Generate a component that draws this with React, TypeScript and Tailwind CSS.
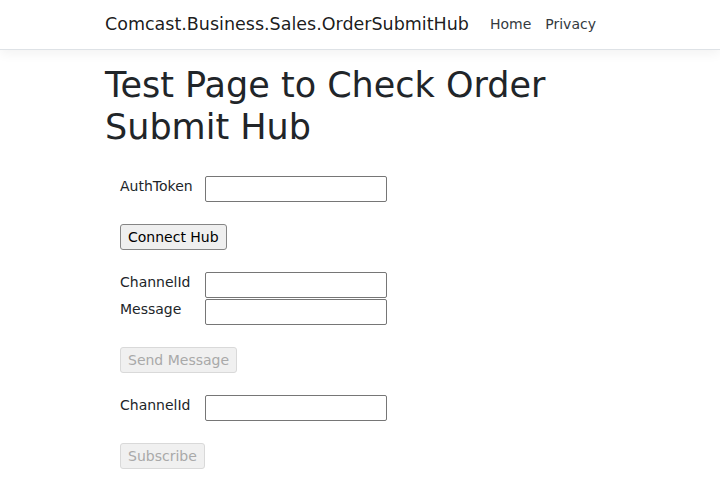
import React from "react";

function Field({ label }: { label: string }) {
  return (
    <div className="flex h-[27px] items-start">
      <div className="w-[85px] shrink-0 leading-[21px]">{label}</div>
      <input
        type="text"
        className="h-[26px] w-[182px] rounded-[2px] border border-[#767676] bg-white px-[2px] text-[14px] outline-none"
      />
    </div>
  );
}

function Button({ label, disabled }: { label: string; disabled?: boolean }) {
  return (
    <div className="flex h-[27px] items-start">
      <button
        type="button"
        disabled={disabled}
        className={
          disabled
            ? "flex h-[26px] items-center rounded-[3px] border border-[#d9d9d9] bg-[#f0f0f0] px-[7px] text-[14px] leading-[21px] text-[#a9a9a9]"
            : "flex h-[26px] items-center rounded-[3px] border border-[#858585] bg-[#efefef] px-[7px] text-[14px] leading-[21px] text-black"
        }
      >
        {label}
      </button>
    </div>
  );
}

const Spacer = () => <div className="h-[21px]" />;

export default function App() {
  return (
    <div className="min-h-[480px] bg-white font-['DejaVu_Sans',sans-serif] text-[14px] leading-[21px] text-[#212529]">
      <header className="mb-[14px] border-b border-[#dee2e6] bg-white py-[7px] shadow-[0_3.5px_10.5px_rgba(0,0,0,0.05)]">
        <div className="mx-auto flex w-[540px] items-center px-[15px]">
          <a className="mr-[14px] py-[4.375px] text-[17.5px] leading-[26.25px] text-black/90">
            Comcast.Business.Sales.OrderSubmitHub
          </a>
          <nav className="flex">
            <a className="px-[7px] py-[7px] text-[#343a40]">Home</a>
            <a className="px-[7px] py-[7px] text-[#343a40]">Privacy</a>
          </nav>
        </div>
      </header>

      <main className="mx-auto w-[540px] px-[15px] pb-[14px]">
        <h1 className="mb-[7px] text-[35px] font-medium leading-[42px]">
          Test Page to Check Order Submit Hub
        </h1>
        <div className="px-[15px]">
          <Spacer />
          <Field label="AuthToken" />
          <Spacer />
          <Button label="Connect Hub" />
          <Spacer />
          <Field label="ChannelId" />
          <Field label="Message" />
          <Spacer />
          <Button label="Send Message" disabled />
          <Spacer />
          <Field label="ChannelId" />
          <Spacer />
          <Button label="Subscribe" disabled />
        </div>
      </main>
    </div>
  );
}
